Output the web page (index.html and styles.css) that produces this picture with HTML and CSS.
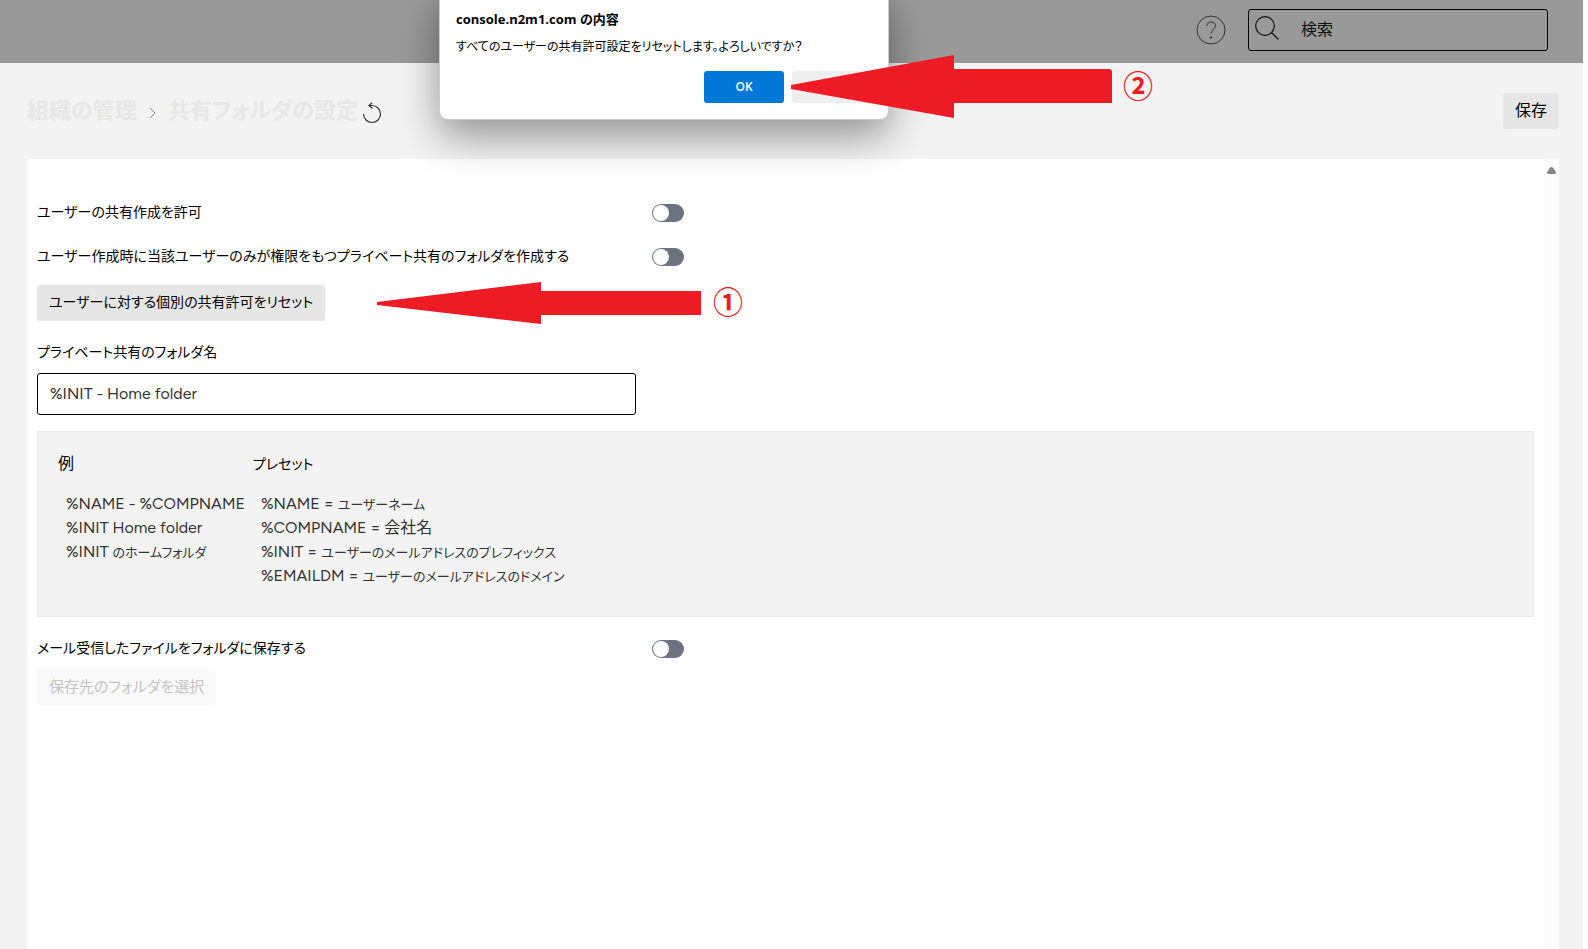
FILE: index.html
```
<!DOCTYPE html>
<html lang="ja">
<head>
  <meta charset="UTF-8" />
  <meta name="viewport" content="width=device-width, initial-scale=1.0" />
  <title>共有フォルダの設定</title>
  <link rel="stylesheet" href="styles.css">
</head>
<body>
  <div class="app">
    <header class="topbar">
      <button type="button" class="icon-button" aria-label="ヘルプ">
        <svg width="30" height="30" viewBox="0 0 30 30" fill="none" stroke="#333">
          <circle cx="15" cy="15" r="14" />
          <path d="M11 11c0-2.500 1.800-4 4.200-4s4.200 1.500 4.200 3.800c0 3.700-4.400 3.500-4.400 8" />
          <circle cx="15" cy="22.500" r="0.700" fill="#333" />
        </svg>
      </button>
      <div class="search">
        <svg width="24" height="24" viewBox="0 0 24 24" fill="none" stroke="#111" stroke-width="1.200">
          <circle cx="10" cy="10" r="9.300" />
          <path d="M16.500 16.500L23.500 23.500" />
        </svg>
        <input type="text" placeholder="検索" aria-label="検索" />
      </div>
    </header>

    <div class="page-head">
      <nav class="breadcrumb">
        <a href="#">組織の管理</a>
        <svg class="chevron" width="7" height="12" viewBox="0 0 7 12" fill="none" stroke="#888">
          <path d="M1 1l5 5-5 5" />
        </svg>
        <a href="#">共有フォルダの設定</a>
        <button type="button" class="icon-button reload" aria-label="再読み込み">
          <svg width="20" height="22" viewBox="0 0 20 22" fill="none" stroke="#333" stroke-width="1.200">
            <path d="M1.500 12a8.500 8.500 0 1 0 8.500-8.500H7" />
            <path d="M10 0.800L7 3.500l3.500 3" />
          </svg>
        </button>
      </nav>
      <button type="button" class="btn">保存</button>
    </div>

    <main class="panel">
      <form class="settings" id="settingsForm">
        <div class="row">
          <label for="allowShare">ユーザーの共有作成を許可</label>
          <input type="checkbox" class="toggle" id="allowShare" />
        </div>
        <div class="row">
          <label for="privateShare">ユーザー作成時に当該ユーザーのみが権限をもつプライベート共有のフォルダを作成する</label>
          <input type="checkbox" class="toggle" id="privateShare" />
        </div>
        <div class="reset-row">
          <button type="button" class="btn btn-reset">ユーザーに対する個別の共有許可をリセット</button>
          <div class="callout callout-reset">
            <svg width="325" height="42" viewBox="0 0 325 42" fill="#ed1c24">
              <path d="M0 20L164 0V9H324V33H164V42L0 23z" />
            </svg>
            <span>①</span>
          </div>
        </div>

        <label class="field-label" for="folderName">プライベート共有のフォルダ名</label>
        <input type="text" class="text-field" id="folderName" value="%INIT - Home folder" />

        <section class="hints">
          <div class="hint">
            <h2>例</h2>
            <ul>
              <li>%NAME - %COMPNAME</li>
              <li>%INIT Home folder</li>
              <li>%INIT <span class="kana">のホームフォルダ</span></li>
            </ul>
          </div>
          <div class="hint">
            <h2><span class="kana">プレセット</span></h2>
            <ul>
              <li>%NAME = <span class="kana">ユーザーネーム</span></li>
              <li>%COMPNAME = 会社名</li>
              <li>%INIT = <span class="kana">ユーザーのメールアドレスのプレフィックス</span></li>
              <li>%EMAILDM = <span class="kana">ユーザーのメールアドレスのドメイン</span></li>
            </ul>
          </div>
        </section>

        <div class="row row-mail">
          <label for="saveMail">メール受信したファイルをフォルダに保存する</label>
          <input type="checkbox" class="toggle" id="saveMail" />
        </div>
        <button type="button" class="btn btn-folder" disabled>保存先のフォルダを選択</button>
      </form>
      <div class="scrollbar">
        <svg width="9" height="7" viewBox="0 0 9 7" fill="#858585">
          <path d="M3 0.800Q4.500-0.700 6 0.800L8.700 4.800Q9.500 7 8 7H1Q-0.500 7 0.300 4.800z" />
        </svg>
      </div>
    </main>
  </div>

  <div class="dialog" role="dialog" aria-labelledby="dialogTitle">
    <h1 id="dialogTitle">console.n2m1.com の内容</h1>
    <p>すべてのユーザーの共有許可設定をリセットします。よろしいですか？</p>
    <div class="dialog-actions">
      <button type="button" class="ok">OK</button>
      <button type="button" class="cancel" aria-label="キャンセル"></button>
    </div>
    <div class="callout callout-ok">
      <svg width="321" height="63" viewBox="0 0 321 63" fill="#ed1c24">
        <path d="M0 30L163 0V14H319L321 16V48H163V63L0 34z" />
      </svg>
      <span>②</span>
    </div>
  </div>
</body>
</html>
```

FILE: styles.css
```
* {
  box-sizing: border-box;
}
body {
  margin: 0;
  background: #fff;
  color: #000;
  font-family: Figtree, Lato, "Noto Sans CJK JP", sans-serif;
  font-size: 16px;
  line-height: 24px;
  font-feature-settings: "palt";
}
button, input {
  font: inherit;
  font-feature-settings: inherit;
  color: inherit;
}
svg {
  display: block;
  flex: none;
}
label, .btn-reset {
  font-size: 14px;
}
.kana {
  font-size: 13px;
}
.app {
  display: flex;
  flex-direction: column;
  min-height: 100vh;
  margin-right: 5px;
  background: #f3f3f3;
}

/* top bar */
.topbar {
  display: flex;
  justify-content: flex-end;
  align-items: center;
  gap: 22px;
  height: 63px;
  padding: 0 35px 4px 0;
  background: #999;
}
.icon-button {
  padding: 0;
  border: 0;
  background: none;
  cursor: pointer;
}
.search {
  display: flex;
  gap: 22px;
  width: 300px;
  height: 42px;
  padding: 6px;
  border: 1px solid #000;
  border-radius: 3px;
}
.search input {
  flex: 1;
  min-width: 0;
  padding: 0;
  border: 0;
  outline: 0;
  background: none;
}
.search input::placeholder {
  color: #111;
}

/* breadcrumb */
.page-head {
  display: flex;
  justify-content: space-between;
  align-items: center;
  height: 96px;
  padding: 0 24px 0 27px;
}
.breadcrumb {
  display: flex;
  align-items: center;
  gap: 12px;
  font-size: 22px;
  font-weight: bold;
}
.breadcrumb a {
  color: #e7e7e7;
  text-decoration: none;
}
.chevron {
  margin-top: 4px;
}
.reload {
  margin: 4px 0 0 -8px;
}
.btn {
  height: 36px;
  padding: 0 12px;
  border: 0;
  border-radius: 3px;
  background: #e6e6e6;
  cursor: pointer;
}
.btn-reset {
  display: block;
}
.btn-folder {
  display: block;
  font-size: 15px;
}
.btn:disabled {
  background: #f9f9f9;
  color: #c3c3c3;
  cursor: default;
}

/* settings panel */
.panel {
  display: flex;
  flex: 1;
  margin: 0 24px 0 27px;
  border-radius: 4px 0 0 0;
  background: #fff;
}
.settings {
  flex: 1;
  padding: 32px 10px;
}
.scrollbar {
  width: 15px;
  padding: 8px 3px;
  background: #fcfcfc;
}
.row {
  display: flex;
  justify-content: space-between;
  align-items: center;
  width: 647px;
  height: 44px;
}
.toggle {
  appearance: none;
  width: 32px;
  height: 18px;
  margin: 0;
  padding: 1px;
  border-radius: 9px;
  background: #6b7280;
  cursor: pointer;
}
.toggle::before {
  content: "";
  display: block;
  width: 16px;
  height: 16px;
  border-radius: 50%;
  background: #fff;
}
.toggle:checked::before {
  margin-left: 14px;
}
.reset-row {
  position: relative;
  padding: 6px 0 20px;
}
.field-label {
  display: block;
  margin-bottom: 8px;
}
.text-field {
  display: block;
  width: 599px;
  height: 42px;
  padding: 0 12px 2px;
  border: 1px solid #000;
  border-radius: 3px;
  color: #333;
}
.hints {
  display: flex;
  gap: 8px;
  margin: 16px 0 12px;
  padding: 20px 20px 28px;
  border: 1px solid #e5e7eb;
  background: #f3f3f3;
}
.hint h2 {
  margin: 0 0 16px;
  font-size: 16px;
  font-weight: normal;
}
.hint h2 .kana {
  font-size: 14px;
}
.hint ul {
  margin: 0;
  padding: 0 0 0 8px;
  list-style: none;
  color: #333;
}
.hint h2, .hint li {
  height: 24px;
}
.row-mail {
  height: 40px;
}

/* confirm dialog */
.dialog {
  position: absolute;
  top: -10px;
  left: 439px;
  width: 450px;
  height: 130px;
  padding: 16px;
  border: 1px solid #ccc;
  border-radius: 9px;
  background: #fff;
  box-shadow: 0 16px 40px rgba(0, 0, 0, 0.4);
  font-size: 12px;
}
.dialog h1 {
  margin: 0;
  font-family: "Open Sans", "Noto Sans CJK JP", sans-serif;
  font-size: 13px;
}
.dialog p {
  margin: 4px 0 12px;
}
.dialog-actions {
  display: flex;
  justify-content: flex-end;
  gap: 8px;
}
.dialog-actions button {
  width: 80px;
  height: 32px;
  border: 0;
  border-radius: 3px;
  background: #eee;
}
.dialog-actions .ok {
  background: #0078d7;
  color: #fff;
  font-family: "Open Sans", sans-serif;
  font-weight: 600;
}

/* numbered arrows */
.callout {
  position: absolute;
  display: flex;
  align-items: center;
  gap: 11px;
  color: #ed1c24;
  font-family: "Noto Sans CJK JP", sans-serif;
  font-size: 30px;
  font-weight: bold;
  pointer-events: none;
}
.callout span {
  padding-bottom: 6px;
}
.callout-reset {
  top: 3px;
  left: 340px;
}
.callout-ok {
  top: 64px;
  left: 351px;
}
```
